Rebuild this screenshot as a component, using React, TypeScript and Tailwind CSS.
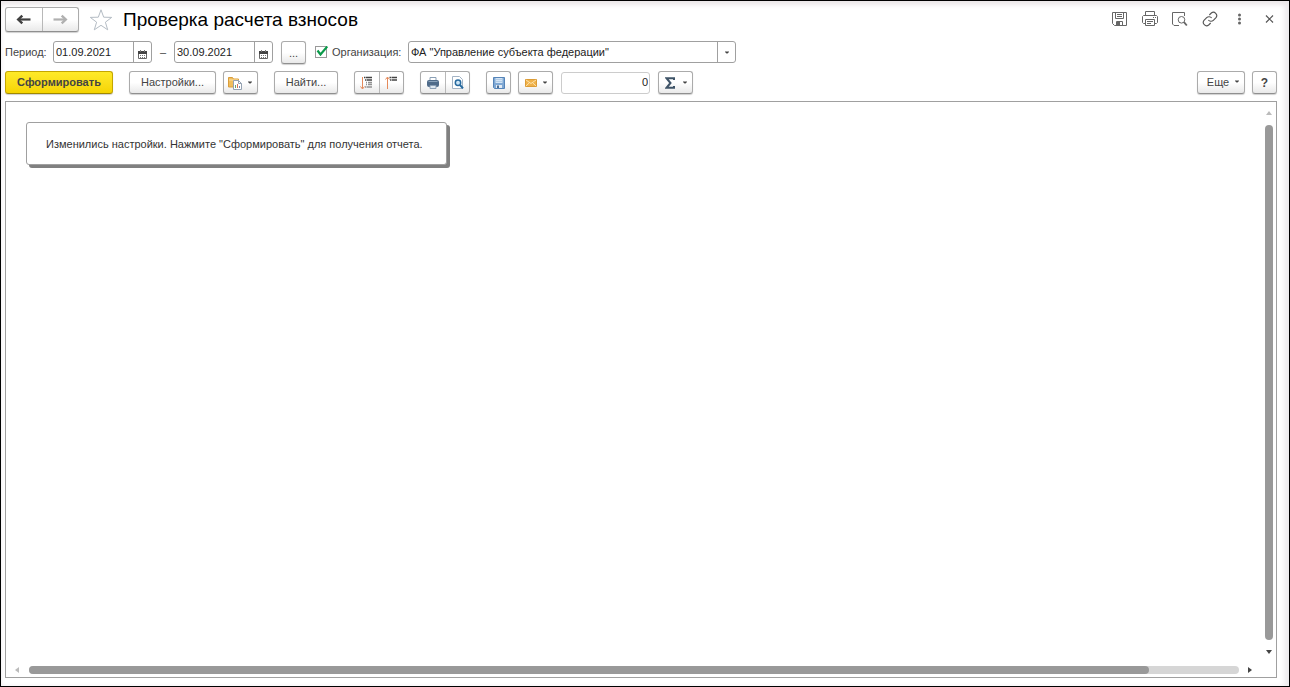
import type { ButtonHTMLAttributes, ReactNode } from 'react';
import clsx from 'clsx';

type ButtonProps = ButtonHTMLAttributes<HTMLButtonElement> & { label?: string; children?: ReactNode };

function ToolButton({ label, className, children, ...rest }: ButtonProps) {
  return (
    <button
      type="button"
      aria-label={label}
      title={label}
      className={clsx(
        'flex h-[23px] shrink-0 items-center justify-center rounded-[3px] border border-[#ababab] border-b-[#8f8f8f] bg-linear-to-b from-white from-50% to-[#e9e9e9] text-[#444444] shadow-[0_1px_1px_#d0d0d0]',
        className,
      )}
      {...rest}
    >
      {children}
    </button>
  );
}

function ButtonPair({ items, tall }: { items: { label: string; icon: ReactNode }[]; tall?: boolean }) {
  return (
    <div
      className={clsx(
        'flex shrink-0 rounded-[3px] border border-[#ababab] border-b-[#8f8f8f] bg-linear-to-b from-white from-50% to-[#e9e9e9] shadow-[0_1px_1px_#d0d0d0]',
        tall ? 'h-[25px] w-[74px]' : 'h-[23px] w-[50px]',
      )}
    >
      {items.map((item, i) => (
        <button
          key={item.label}
          type="button"
          aria-label={item.label}
          title={item.label}
          className={clsx('flex flex-1 items-center justify-center', i > 0 && 'border-l border-[#b8b8b8]')}
        >
          {item.icon}
        </button>
      ))}
    </div>
  );
}

function Caret() {
  return (
    <svg width="4" height="3" viewBox="0 0 4 3" className="shrink-0" aria-hidden="true">
      <path d="M0 .500h4v.500L2.500 2.500h-1L0 1z" fill="#444" />
    </svg>
  );
}

function Arrow({ color, flip }: { color: string; flip?: boolean }) {
  return (
    <svg width="15" height="11" viewBox="0 0 15 11" className={flip ? 'rotate-180' : undefined} aria-hidden="true">
      <path d="M14.500 5.500H3" fill="none" stroke={color} strokeWidth="2.200" />
      <path d="M6.300 1.600 2.200 5.500l4.100 3.900" fill="none" stroke={color} strokeWidth="2.400" />
    </svg>
  );
}

function CalendarIcon() {
  return (
    <svg width="9" height="9" viewBox="0 0 9 9" aria-hidden="true">
      <path d="M.5 1.5h8v7h-8z" fill="#fff" stroke="#666" />
      <path d="M0 1h9v3H0z" fill="#444" />
      <path d="M2 0h1v2H2zM6 0h1v2H6z" fill="#777" />
      <path d="M2 5h1v1H2zM4 5h1v1H4zM6 5h1v1H6zM2 7h1v1H2zM4 7h1v1H4zM6 7h1v1H6z" fill="#777" />
    </svg>
  );
}

function DateField({ label, value }: { label: string; value: string }) {
  return (
    <div className="flex h-[22px] w-[99px] shrink-0 rounded-[3px] border border-[#a0a0a0] bg-white">
      <input aria-label={label} defaultValue={value} className="w-[79px] min-w-0 pl-[2px] text-[#222222] outline-none" />
      <button
        type="button"
        aria-label={`${label}: календарь`}
        className="flex flex-1 items-center justify-center border-l border-[#a0a0a0] pt-1 pr-[1px]"
      >
        <CalendarIcon />
      </button>
    </div>
  );
}

function VariantsIcon() {
  return (
    <svg width="14" height="14" viewBox="0 0 14 14" aria-hidden="true">
      <path d="M.5 1.5h4l1 1.5h5v8H.5z" fill="#f0bd5c" stroke="#d99d3c" />
      <path d="M1 4h9" stroke="#fbe0a0" />
      <path d="M5.500 4.500h5l3 3v6h-8z" fill="#fff" stroke="#95a2b2" />
      <path d="M10.500 4.500v3h3" fill="none" stroke="#95a2b2" />
      <path d="M7 9h1v3H7z" fill="#68a46b" />
      <path d="M9 8h1v4H9z" fill="#d77457" />
      <path d="M11 10h1v2h-1z" fill="#718ab1" />
    </svg>
  );
}

function ExpandIcon() {
  return (
    <svg width="13" height="14" viewBox="0 0 13 14" aria-hidden="true">
      <path d="M2.500 1v11.500M.500 10.500l2 2.500 2-2.500" fill="none" stroke="#e58a5b" />
      <path d="M4 1.500h1.500M6 1.500h6M5 4h1.500M7 4h5" stroke="#444" strokeWidth="1.400" />
      <path d="M6 6.500h1M8 6.500h4M6 8.500h1M8 8.500h4M5 11h1.500M7 11h5" stroke="#929292" strokeWidth="1.300" />
    </svg>
  );
}

function CollapseIcon() {
  return (
    <svg width="13" height="14" viewBox="0 0 13 14" aria-hidden="true">
      <path d="M2.500 13V1.500M.500 3.500l2-2.500 2 2.500" fill="none" stroke="#e58a5b" />
      <path d="M4.500 1.500H6M6.500 1.500H12M5 4h1.500M7 4h5" stroke="#444" strokeWidth="1.400" />
    </svg>
  );
}

function PrinterIcon() {
  return (
    <svg width="12" height="12" viewBox="0 0 12 12" aria-hidden="true">
      <path d="M3 .500h6V4H3z" fill="#fff" stroke="#8a9fb5" />
      <rect x="0" y="3" width="12" height="7" rx="2" fill="#4f6b89" />
      <path d="M1.500 4.500h9" stroke="#8aa3bb" />
      <path d="M3 8.500h6v3H3z" fill="#dfe8f0" stroke="#8a9fb5" />
    </svg>
  );
}

function PreviewIcon() {
  return (
    <svg width="13" height="13" viewBox="0 0 13 13" aria-hidden="true">
      <path d="M1.500.500h7l3 3v9h-10z" fill="#fff" stroke="#a3b3c4" />
      <circle cx="7" cy="6.800" r="2.700" fill="#cde6f7" stroke="#276a9f" strokeWidth="1.500" />
      <path d="m9 9 3 3.300" stroke="#276a9f" strokeWidth="2" />
    </svg>
  );
}

function DiskIcon() {
  return (
    <svg width="12" height="12" viewBox="0 0 12 12" aria-hidden="true">
      <path d="M.500.500h11v11h-10l-1-1z" fill="#7fa8d4" stroke="#5584b8" />
      <path d="M2.500 1h7v5h-7z" fill="#d3e4f5" />
      <path d="M3 2.500h6M3 4.500h6" stroke="#b3cce5" />
      <path d="M3 8h6v3H3z" fill="#e5ecf3" />
      <path d="M4 8.500h2V11H4z" fill="#4c6f96" />
    </svg>
  );
}

function MailIcon() {
  return (
    <svg width="12" height="8" viewBox="0 0 12 8" aria-hidden="true">
      <path d="M.500.500h11v7H.500z" fill="#f0b24a" stroke="#dc9c36" />
      <path d="m1 1 5 3.500L11 1M1 7l3.500-3.300M11 7 7.500 3.700" fill="none" stroke="#fce3ae" />
    </svg>
  );
}

function SigmaIcon() {
  return (
    <svg width="10" height="12" viewBox="0 0 10 12" aria-hidden="true">
      <path d="M9 3V1.200H1.500L5.500 6l-4 4.800H9V9" fill="none" stroke="#3f5468" strokeWidth="2" />
    </svg>
  );
}

const windowActions: { label: string; icon: ReactNode }[] = [
  {
    label: 'Сохранить',
    icon: (
      <svg width="16" height="16" viewBox="0 0 16 16" fill="none" stroke="#666">
        <path d="M.500 1.500h14v13h-12l-2-2z" />
        <path d="M3.500 1.500v6h8v-6M5 3.500h5M5 5.500h5M4.500 14.500v-4h6v4" />
        <path d="M5 11h3v3H5z" fill="#666" stroke="none" />
      </svg>
    ),
  },
  {
    label: 'Печать',
    icon: (
      <svg width="16" height="16" viewBox="0 0 16 16" fill="none" stroke="#666">
        <path d="M3.500 4.500v-4h9v4M3.500 12.500h-2l-1-1v-6l1-1h13l1 1v6l-1 1h-2" />
        <path d="M3.500 8.500h9v6h-9zM5 10.500h6M5 12.500h4M11 6.500h1M13 6.500h1" />
      </svg>
    ),
  },
  {
    label: 'Просмотр',
    icon: (
      <svg width="16" height="16" viewBox="0 0 16 16" fill="none" stroke="#666">
        <path d="M7 14.500H2L.500 13V1.500h12V5" />
        <circle cx="9.500" cy="8.800" r="3.300" />
        <path d="m12 11.200 2.800 3.300" strokeWidth="1.800" />
      </svg>
    ),
  },
  {
    label: 'Ссылка',
    icon: (
      <svg width="16" height="16" viewBox="0 0 24 24" fill="none" stroke="#555" strokeWidth="1.700">
        <path d="M9.500 13.500a5 5 0 0 0 7.500.500l4-4a5 5 0 0 0-7-7l-3 3" />
        <path d="M14.500 10.500a5 5 0 0 0-7.500-.500l-4 4a5 5 0 0 0 7 7l3-3" />
      </svg>
    ),
  },
  {
    label: 'Меню',
    icon: (
      <svg width="16" height="16" viewBox="0 0 16 16" fill="#666">
        <circle cx="7.500" cy="4" r="1.500" />
        <circle cx="7.500" cy="8" r="1.500" />
        <circle cx="7.500" cy="12" r="1.500" />
      </svg>
    ),
  },
  {
    label: 'Закрыть',
    icon: (
      <svg width="16" height="16" viewBox="0 0 16 16" fill="none" stroke="#555" strokeWidth="1.200">
        <path d="m4 4.500 7 7M11 4.500l-7 7" />
      </svg>
    ),
  },
];

function ScrollArrow({ label, d, color }: { label: string; d: string; color: string }) {
  return (
    <button type="button" aria-label={label} className="flex size-4 shrink-0 items-center justify-center">
      <svg width="6" height="6" viewBox="0 0 6 6" aria-hidden="true">
        <path d={d} fill={color} />
      </svg>
    </button>
  );
}

export default function App() {
  return (
    <div className="flex h-screen flex-col border border-black bg-white pt-[6px] pr-3 pb-2 pl-1 font-['Liberation_Sans',Arial,sans-serif] text-[11px] leading-[14px] text-[#444444] shadow-[inset_0_4px_4px_#ece8ea,inset_-5px_0_5px_#f0eef0]">
      <header className="flex h-[25px] shrink-0 items-center">
        <ButtonPair
          tall
          items={[
            { label: 'Назад', icon: <Arrow color="#404040" /> },
            { label: 'Вперед', icon: <Arrow color="#b0b0b0" flip /> },
          ]}
        />
        <button type="button" aria-label="В избранное" className="ml-[10px] shrink-0">
          <svg width="24" height="24" viewBox="0 0 24 24" aria-hidden="true">
            <path
              d="m12 1.800 2.700 7.400 8 .2-6.300 4.800 2.300 7.600L12 17.300l-6.700 4.500 2.300-7.600-6.300-4.800 8-.2z"
              fill="#fff"
              stroke="#b4bcc4"
            />
          </svg>
        </button>
        <h1 className="ml-[10px] text-[19px] leading-6 whitespace-nowrap text-black">Проверка расчета взносов</h1>
        <div className="-mr-[1px] ml-auto flex gap-[14px] pb-[2px]">
          {windowActions.map((a) => (
            <button key={a.label} type="button" aria-label={a.label} title={a.label}>
              {a.icon}
            </button>
          ))}
        </div>
      </header>

      <div className="mt-[9px] flex h-[22px] shrink-0 items-center gap-2 whitespace-nowrap">
        <span className="w-10">Период:</span>
        <DateField label="Начало периода" value="01.09.2021" />
        <span className="w-[6px]">–</span>
        <DateField label="Конец периода" value="30.09.2021" />
        <ToolButton label="Выбрать период" className="w-[25px] pt-[2px]">
          ...
        </ToolButton>
        <label className="ml-[1px] flex w-[85px] items-center gap-[5px]">
          <span className="relative flex size-3 shrink-0">
            <input
              type="checkbox"
              defaultChecked
              className="peer size-3 appearance-none border border-[#999999] bg-white"
            />
            <svg
              width="12"
              height="10"
              viewBox="0 0 12 10"
              className="pointer-events-none absolute top-0 left-[1px] hidden peer-checked:block"
              aria-hidden="true"
            >
              <path d="m1.500 4.500 3 4L11.300.500" fill="none" stroke="#0a9b4a" strokeWidth="2.200" />
            </svg>
          </span>
          Организация:
        </label>
        <div className="flex h-[22px] w-[328px] rounded-[3px] border border-[#a0a0a0] bg-white">
          <input
            aria-label="Организация"
            defaultValue={'ФА "Управление субъекта федерации"'}
            className="min-w-0 flex-1 pl-[2px] text-[#222222] outline-none"
          />
          <button
            type="button"
            aria-label="Выбрать организацию"
            className="flex w-[18px] items-center justify-center border-l border-[#a0a0a0]"
          >
            <Caret />
          </button>
        </div>
      </div>

      <div className="mt-2 flex h-[23px] shrink-0 items-center gap-4 whitespace-nowrap">
        <button
          type="button"
          className="h-[23px] w-[108px] rounded-[3px] border border-[#c4a600] border-b-[#a08800] bg-linear-to-b from-[#ffea28] to-[#f5d400] pb-[2px] font-bold text-[#444444] shadow-[0_1px_1px_#d0d0d0]"
        >
          Сформировать
        </button>
        <div className="flex gap-[7px]">
          <ToolButton className="w-[87px] pb-[2px]">Настройки...</ToolButton>
          <ToolButton label="Варианты отчета" className="w-[35px] gap-[6px] pr-[2px]">
            <VariantsIcon />
            <Caret />
          </ToolButton>
        </div>
        <ToolButton className="w-16 pb-[2px]">Найти...</ToolButton>
        <ButtonPair
          items={[
            { label: 'Развернуть группы', icon: <ExpandIcon /> },
            { label: 'Свернуть группы', icon: <CollapseIcon /> },
          ]}
        />
        <ButtonPair
          items={[
            { label: 'Печать отчета', icon: <PrinterIcon /> },
            { label: 'Предварительный просмотр', icon: <PreviewIcon /> },
          ]}
        />
        <div className="flex items-center gap-[7px]">
          <ToolButton label="Сохранить отчет" className="w-[25px]">
            <DiskIcon />
          </ToolButton>
          <ToolButton label="Отправить" className="w-[35px] gap-[6px]">
            <MailIcon />
            <Caret />
          </ToolButton>
          <input
            aria-label="Сумма"
            defaultValue="0"
            className="mx-[1px] h-[22px] w-[89px] rounded-[3px] border border-[#cccccc] bg-white pr-[1px] pb-[1px] text-right text-[#222222] outline-none"
          />
          <ToolButton label="Итог" className="w-[35px] gap-2">
            <SigmaIcon />
            <Caret />
          </ToolButton>
        </div>
        <div className="ml-auto flex gap-[7px]">
          <ToolButton className="w-12 gap-[6px] pb-[2px] pl-1">
            Еще
            <Caret />
          </ToolButton>
          <ToolButton label="Справка" className="w-[25px] text-[12px] font-bold">
            ?
          </ToolButton>
        </div>
      </div>

      <main className="mt-[7px] flex min-h-0 flex-1 flex-col border border-[#a0a0a0] bg-white">
        <div className="flex min-h-0 flex-1">
          <div className="min-w-0 flex-1 p-5">
            <p className="flex h-[43px] w-[421px] items-center rounded-[3px] border border-[#a0a0a0] bg-white pl-[19px] whitespace-nowrap text-[#333333] shadow-[3px_3px_0_#808080]">
              Изменились настройки. Нажмите "Сформировать" для получения отчета.
            </p>
          </div>
          <div className="flex w-[15px] flex-col items-center pt-[3px]">
            <ScrollArrow label="Вверх" d="M0 5h6L3 1z" color="#bbb" />
            <div className="mt-1 w-2 flex-1 rounded-full bg-[#999999]" />
            <div className="mt-1">
              <ScrollArrow label="Вниз" d="M0 1h6L3 5z" color="#444" />
            </div>
          </div>
        </div>
        <div className="flex h-[17px] shrink-0 items-center pt-[2px] pr-[18px] pl-[3px]">
          <ScrollArrow label="Влево" d="M5 0v6L1 3z" color="#bbb" />
          <div className="ml-1 h-2 flex-1 rounded-full bg-[#d6d6d6]">
            <div className="h-2 w-[92.600%] rounded-full bg-[#999999]" />
          </div>
          <div className="ml-[3px]">
            <ScrollArrow label="Вправо" d="M1 0v6l4-3z" color="#444" />
          </div>
        </div>
      </main>
    </div>
  );
}
